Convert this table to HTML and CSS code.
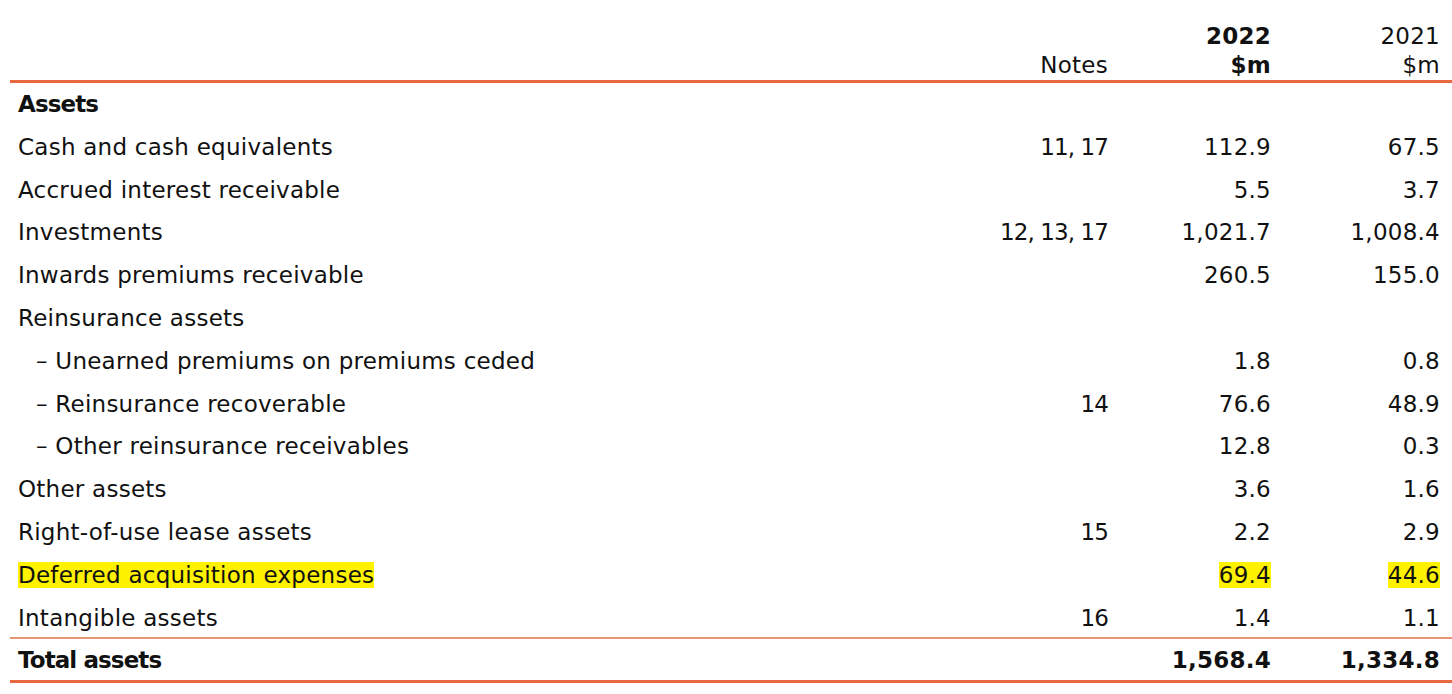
FILE: index.html
```html
<!DOCTYPE html>
<html>
<head>
<meta charset="utf-8">
<link rel="stylesheet" href="styles.css">
</head>
<body>
<div class="sheet">
  <div class="head">
    <div class="cell"></div>
    <div class="cell num">Notes</div>
    <div class="cell num bold">2022<br>$m</div>
    <div class="cell num">2021<br>$m</div>
  </div>
  <div class="body">
    <div class="row"><div class="cell bold label">Assets</div><div class="cell num note"></div><div class="cell num"></div><div class="cell num"></div></div>
    <div class="row"><div class="cell">Cash and cash equivalents</div><div class="cell num note">11, 17</div><div class="cell num">112.9</div><div class="cell num">67.5</div></div>
    <div class="row"><div class="cell">Accrued interest receivable</div><div class="cell num note"></div><div class="cell num">5.5</div><div class="cell num">3.7</div></div>
    <div class="row"><div class="cell">Investments</div><div class="cell num note">12, 13, 17</div><div class="cell num">1,021.7</div><div class="cell num">1,008.4</div></div>
    <div class="row"><div class="cell">Inwards premiums receivable</div><div class="cell num note"></div><div class="cell num">260.5</div><div class="cell num">155.0</div></div>
    <div class="row"><div class="cell">Reinsurance assets</div><div class="cell num note"></div><div class="cell num"></div><div class="cell num"></div></div>
    <div class="row"><div class="cell sub">– Unearned premiums on premiums ceded</div><div class="cell num note"></div><div class="cell num">1.8</div><div class="cell num">0.8</div></div>
    <div class="row"><div class="cell sub">– Reinsurance recoverable</div><div class="cell num note">14</div><div class="cell num">76.6</div><div class="cell num">48.9</div></div>
    <div class="row"><div class="cell sub">– Other reinsurance receivables</div><div class="cell num note"></div><div class="cell num">12.8</div><div class="cell num">0.3</div></div>
    <div class="row"><div class="cell">Other assets</div><div class="cell num note"></div><div class="cell num">3.6</div><div class="cell num">1.6</div></div>
    <div class="row"><div class="cell">Right-of-use lease assets</div><div class="cell num note">15</div><div class="cell num">2.2</div><div class="cell num">2.9</div></div>
    <div class="row"><div class="cell"><span class="hl">Deferred acquisition expenses</span></div><div class="cell num note"></div><div class="cell num"><span class="hl">69.4</span></div><div class="cell num"><span class="hl">44.6</span></div></div>
    <div class="row"><div class="cell">Intangible assets</div><div class="cell num note">16</div><div class="cell num">1.4</div><div class="cell num">1.1</div></div>
  </div>
  <div class="row total"><div class="cell bold label">Total assets</div><div class="cell num note"></div><div class="cell num bold">1,568.4</div><div class="cell num bold">1,334.8</div></div>
</div>
</body>
</html>
```
FILE: styles.css
```css
html, body {
  margin: 0;
  padding: 0;
  background: #ffffff;
}
body {
  font-family: "DejaVu Sans", "Liberation Sans", sans-serif;
  font-size: 23px;
  letter-spacing: 0.25px;
  color: #111111;
}
.sheet {
  margin-left: 10px;
}
.head,
.row {
  display: grid;
  grid-template-columns: 1fr 200px 163px 169px;
  padding: 0 12px 0 8px;
}
.head {
  height: 83px;
  align-items: end;
  line-height: 29px;
  box-sizing: border-box;
  border-bottom: 3px solid #e8693f;
}
.row {
  height: 42.8px;
  line-height: 42.8px;
}
.body .row:last-child {
  height: 40.4px;
}
.cell {
  white-space: nowrap;
}
.num {
  text-align: right;
}
.note {
  letter-spacing: -0.9px;
}
.bold {
  font-weight: bold;
}
.label {
  letter-spacing: -0.9px;
}
.sub {
  padding-left: 18px;
}
.body {
  border-bottom: 2px solid #e69574;
}
.row.total {
  height: 41px;
  line-height: 43px;
  border-bottom: 3px solid #e8693f;
}
.hl {
  background: #fff200;
}
```
